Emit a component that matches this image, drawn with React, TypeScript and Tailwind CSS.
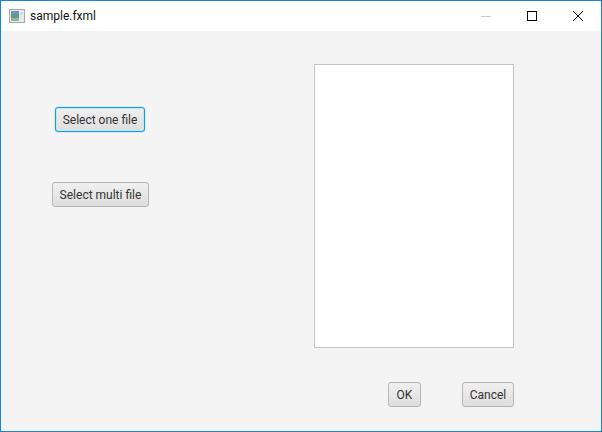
const btn =
  "flex h-[25px] items-center justify-center rounded-[3px] border bg-gradient-to-b from-[#f0f0f0] to-[#dedede] text-[12px] text-[#333333]"

export default function App() {
  return (
    <div className="flex h-[432px] w-[602px] flex-col border border-[#1883d7] bg-[#f4f4f4] font-['Roboto',sans-serif]">
      <div className="flex h-[30px] shrink-0 items-center justify-between bg-white">
        <div className="flex items-center gap-[5px] pl-[8px]">
          <svg width="16" height="14" viewBox="0 0 16 14">
            <rect x="0.5" y="0.5" width="15" height="13" fill="#ececec" stroke="#a4a8ab" />
            <rect x="2" y="2" width="8" height="10" fill="#5f9a96" />
            <rect x="2" y="2" width="8" height="3" fill="#6f96b8" />
            <rect x="2" y="9" width="8" height="3" fill="#8fb89a" />
            <rect x="11" y="3" width="3" height="3" fill="#cfdcd2" />
            <rect x="11" y="7" width="3" height="5" fill="#e6ebe8" />
          </svg>
          <span className="text-[12px] text-[#111111]">sample.fxml</span>
        </div>
        <div className="flex h-full items-center">
          <div className="flex w-[46px] justify-center">
            <svg width="10" height="10" viewBox="0 0 10 10">
              <path d="M0 5.5H10" stroke="#cccccc" />
            </svg>
          </div>
          <div className="flex w-[46px] justify-center">
            <svg width="10" height="10" viewBox="0 0 10 10">
              <rect x="0.5" y="0.5" width="9" height="9" fill="none" stroke="#000000" />
            </svg>
          </div>
          <div className="flex w-[46px] justify-center">
            <svg width="10" height="10" viewBox="0 0 10 10">
              <path d="M0 0L10 10M10 0L0 10" stroke="#000000" />
            </svg>
          </div>
        </div>
      </div>

      <div className="flex flex-1">
        <div className="flex w-[313px] flex-col items-start pl-[51px] pt-[76px]">
          <button className={`${btn} ml-[3px] w-[90px] border-[#12a0dc] shadow-[inset_0_0_0_1px_#bfe6f5,0_0_1px_#12a0dc]`}>
            Select one file
          </button>
          <button className={`${btn} mt-[50px] h-[24px] w-[97px] border-[#b5b5b5]`}>Select multi file</button>
        </div>
        <div className="flex flex-col items-end pt-[33px]">
          <div className="h-[284px] w-[200px] border border-[#c2c2c2] bg-white" />
          <div className="mt-[34px] flex gap-[41px]">
            <button className={`${btn} w-[33px] border-[#b5b5b5]`}>OK</button>
            <button className={`${btn} w-[52px] border-[#b5b5b5]`}>Cancel</button>
          </div>
        </div>
      </div>
    </div>
  )
}
